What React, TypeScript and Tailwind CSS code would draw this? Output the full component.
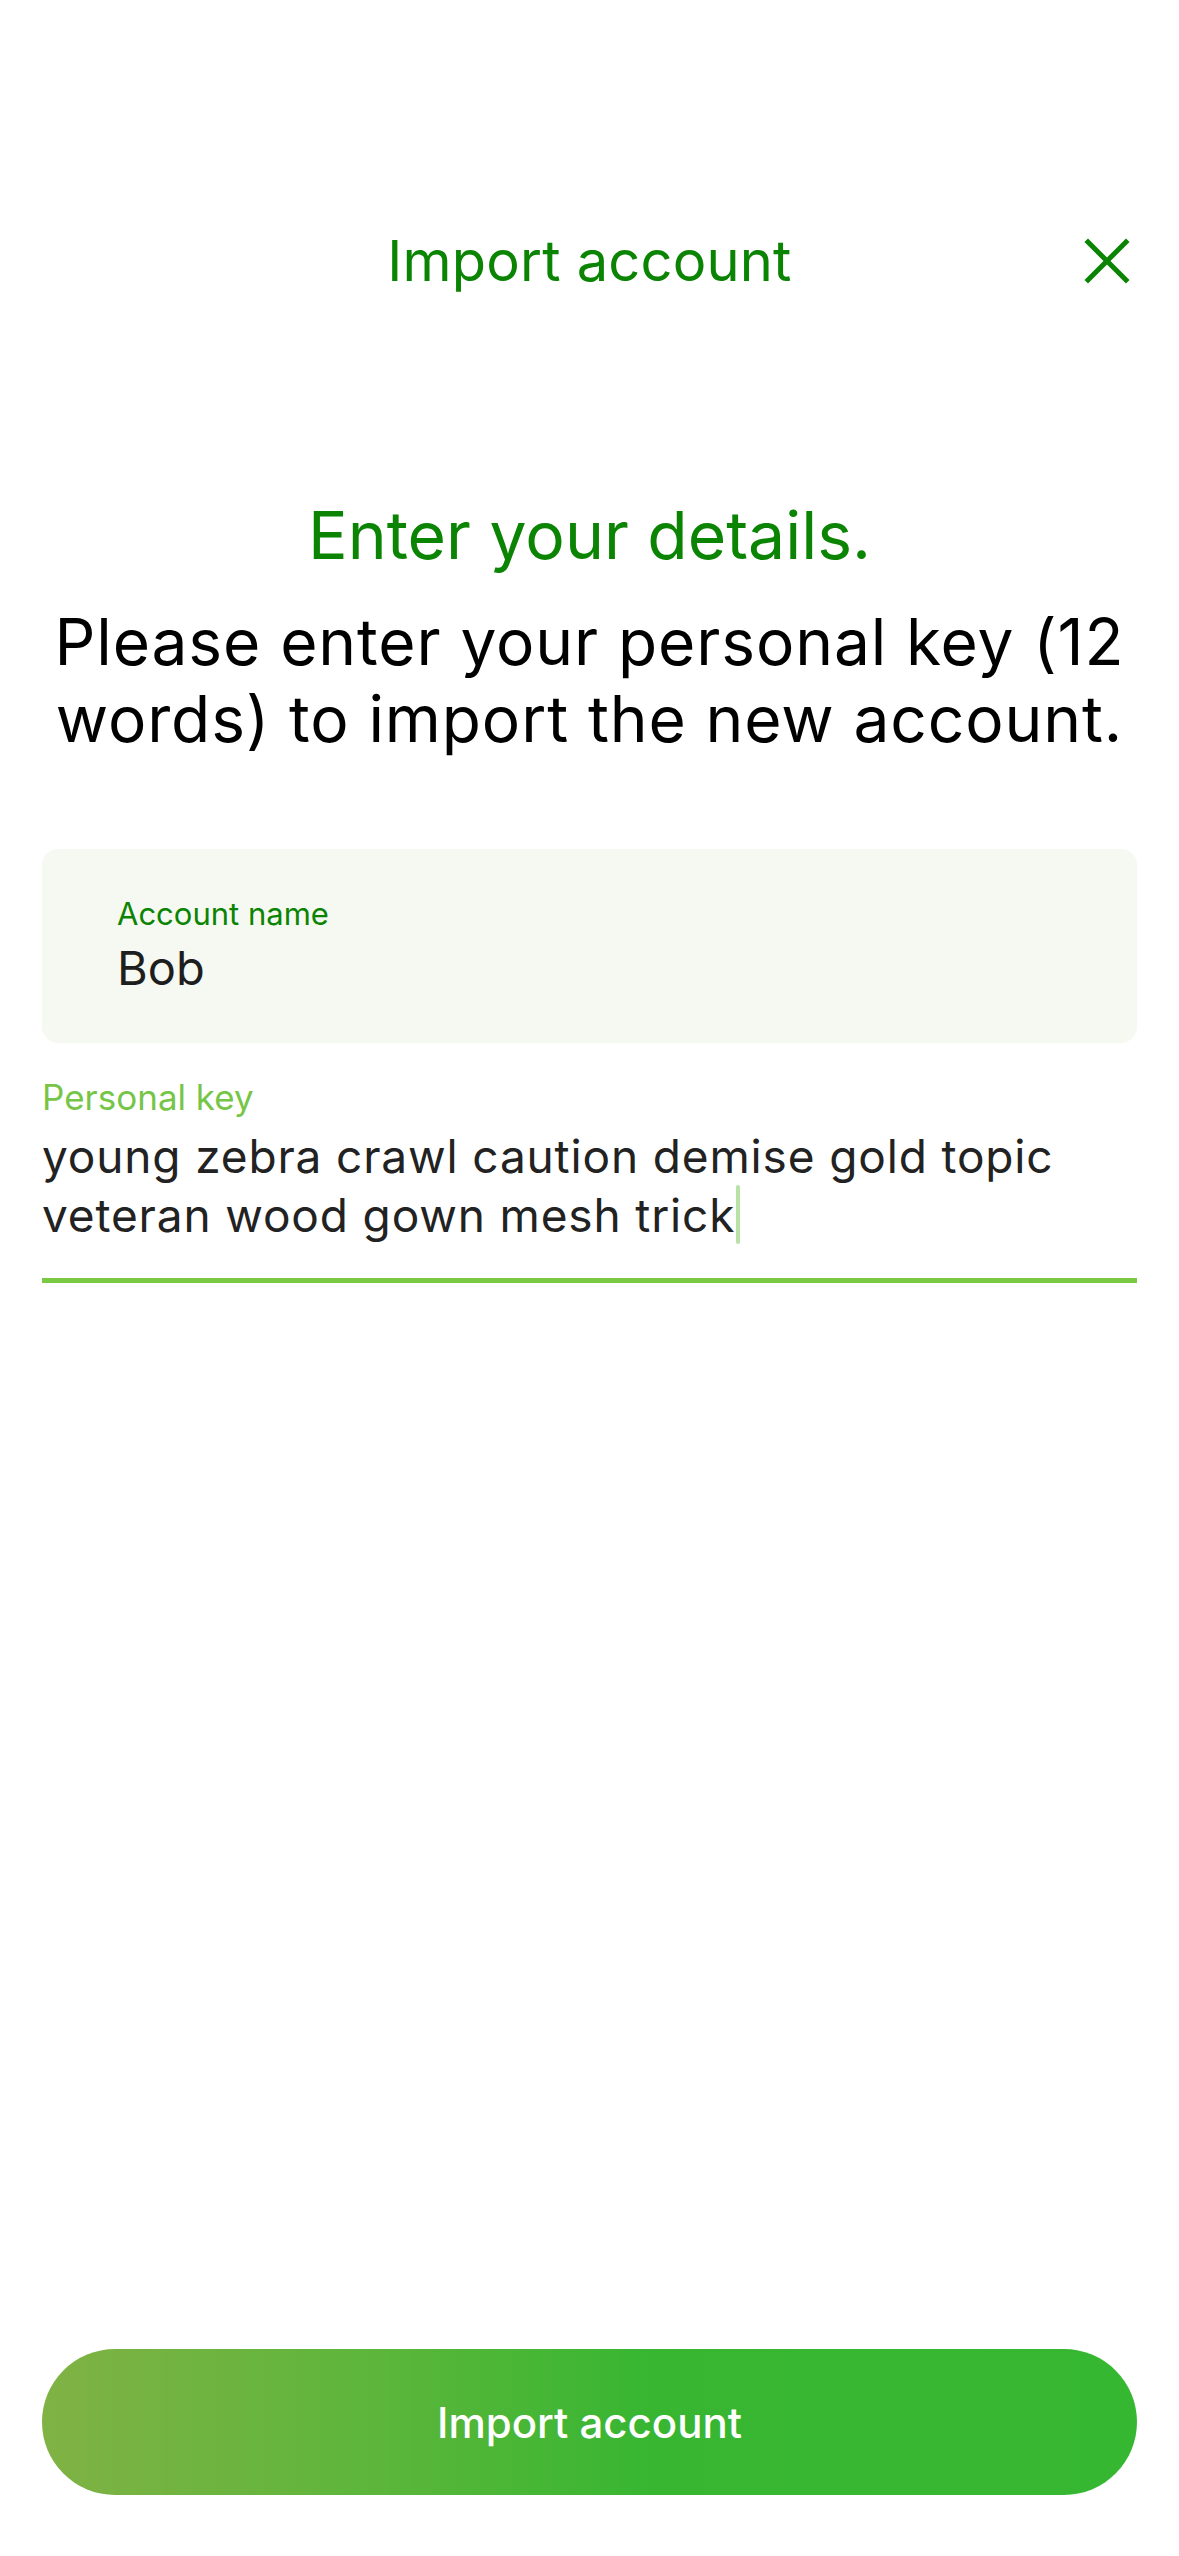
import React from "react";

export default function App() {
  const font = { fontFamily: "Inter, 'Noto Sans', sans-serif" };
  return (
    <div
      className="w-[1179px] h-[2556px] bg-white flex flex-col"
      style={font}
    >
      {/* Header */}
      <div className="mt-[218px] h-[86px] grid grid-cols-[1fr_auto_1fr] items-center px-[52px]">
        <div />
        <div className="text-[56px] leading-none text-[#0b8404] tracking-[0.2px]">
          Import account
        </div>
        <div className="flex justify-end">
          <svg width="46" height="46" viewBox="0 0 46 46" className="mr-[-3px]">
            <path
              d="M4 4 L42 42 M42 4 L4 42"
              stroke="#0b8404"
              strokeWidth="5"
              strokeLinecap="square"
            />
          </svg>
        </div>
      </div>

      {/* Title */}
      <div className="mt-[193px] text-center text-[66px] leading-[76px] text-[#0b8404]">
        Enter your details.
      </div>
      <div className="mt-[30px] px-[36px] text-center text-[64px] leading-[77px] tracking-[0.9px] text-black">
        Please enter your personal key (12 words) to import the new account.
      </div>

      {/* Account name box */}
      <div className="mt-[92px] mx-[42px] h-[194px] rounded-[16px] bg-[#f6f9f1] px-[75px] pt-[47px]">
        <div className="text-[31px] leading-[36px] text-[#0b8404]">Account name</div>
        <div className="mt-[8px] text-[47px] leading-[56px] text-[#1e1e1e]">Bob</div>
      </div>

      {/* Personal key */}
      <div className="mx-[42px] mt-[34px]">
        <div className="text-[35px] leading-[40px] text-[#76c548]">Personal key</div>
        <div className="mt-[11px] text-[46px] leading-[57px] tracking-[0.85px] text-[#222222]">
          young zebra crawl caution demise gold topic
          <br />
          veteran wood gown mesh trick
          <span className="inline-block align-[-12px] w-[4px] h-[59px] ml-[1px] rounded-full bg-[#b9e2a6]" />
        </div>
        <div className="mt-[34px] h-[5px] bg-[#7ac943]" />
      </div>

      <div className="flex-1" />

      {/* Button */}
      <div className="mx-[42px] mb-[61px] h-[146px] rounded-full bg-[linear-gradient(90deg,#80b244_0%,#5db63b_30%,#38b632_55%,#36b731_100%)] flex items-center justify-center">
        <span className="text-[42px] font-medium text-white">Import account</span>
      </div>
    </div>
  );
}
